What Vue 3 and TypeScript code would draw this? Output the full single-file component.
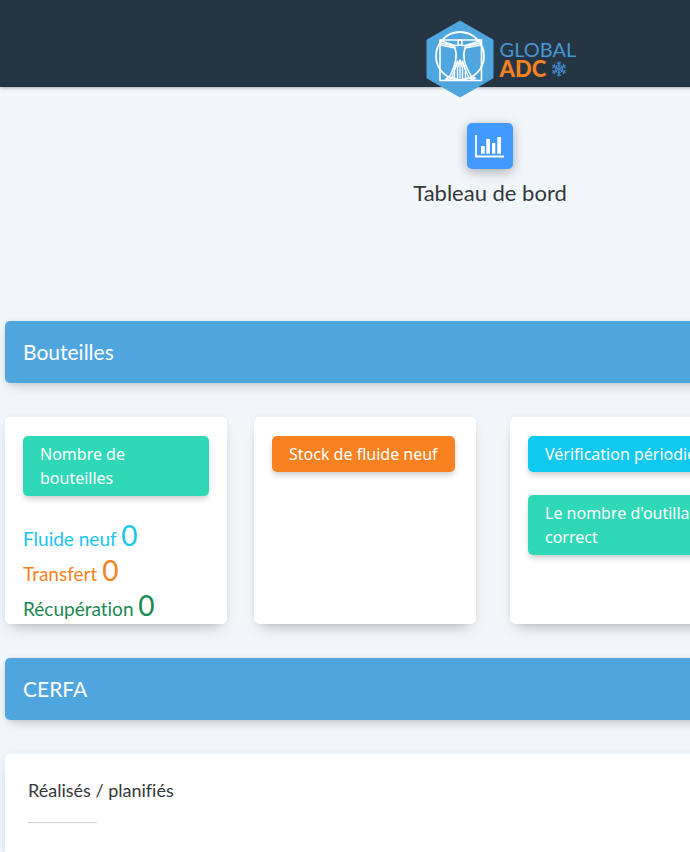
<script setup lang="ts">
interface Counter {
  label: string
  value: number
  tone: string
}

const counters: Counter[] = [
  { label: 'Fluide neuf', value: 0, tone: 'cyan' },
  { label: 'Transfert', value: 0, tone: 'orange' },
  { label: 'Récupération', value: 0, tone: 'forest' },
]

const flakeArms: number[] = [0, 60, 120, 180, 240, 300]
</script>

<template>
  <div class="shell">
    <div class="page">
      <header class="topbar">
        <a class="logo" href="#" aria-label="Global ADC">
          <svg class="emblem" viewBox="0 0 68 78" aria-hidden="true">
            <path d="M34 1 67 20V58L34 77 1 58V20Z" fill="#4fa6df" stroke="#4fa6df" stroke-linejoin="round" />
            <g fill="none" stroke="#fff" stroke-linecap="round" stroke-linejoin="round">
              <circle cx="34" cy="36" r="24" stroke-width="1.8" />
              <path d="M14 20H55.500V60.500H14Z" stroke-width="1.600" />
              <ellipse cx="34" cy="22.500" rx="2" ry="2.800" stroke-width="1.500" />
              <path d="M32 25.500 28.500 25.500 14.500 20.500M36 25.500 39.500 25.500 55 20.500M14.500 25 29 28M55 25 39 28M14.500 23 28 26M55 23 40 26" stroke-width="1.500" />
              <path d="M28.500 27Q31 33 29.800 39C29 46 26 52 24 56L19.500 59.500H23.500L27 57M39.500 27Q37 33 38.200 39C39 46 43 52 45 56L49.500 58.500 46 59.500 42 57" stroke-width="1.600" />
              <path d="M34 40 31.500 48 31.500 59.500H28.500L28.500 50 31.500 41M34 40 36.500 48V59.500H39.500V50L36.500 41" stroke-width="1.500" />
              <path d="M32 42 28.500 50 26 57M36 42 39.500 50 42.500 57M34 42V58" stroke-width="1.300" />
            </g>
          </svg>
          <span class="wordmark">
            <span class="word-top">GLOBAL</span>
            <span class="word-bottom">
              ADC
              <svg class="flake" viewBox="-8 -8 16 16" aria-hidden="true">
                <path
                  v-for="angle in flakeArms"
                  :key="angle"
                  :transform="`rotate(${angle})`"
                  d="M0 0V-7.500M0 -4.600 -2 -6.600M0 -4.600 2 -6.600M0 -2.400 -1.500 -3.900M0 -2.400 1.500 -3.900"
                />
              </svg>
            </span>
          </span>
        </a>
      </header>

      <main class="content">
        <section class="intro">
          <span class="tile">
            <svg viewBox="0 0 30 24" aria-hidden="true">
              <path d="M1 1V22.500H29" fill="none" stroke="#fff" stroke-width="1.800" />
              <path d="M6 12H9.700V19.700H6ZM11.300 5H15V19.700H11.300ZM17 9H20.300V19.700H17ZM22.300 3H26V19.700H22.300Z" fill="#fff" />
            </svg>
          </span>
          <h1>Tableau de bord</h1>
        </section>

        <h2 class="banner">Bouteilles</h2>

        <section class="cards">
          <div class="pair">
            <article class="card">
              <button class="pill green" type="button">Nombre de bouteilles</button>
              <ul class="counters">
                <li v-for="c in counters" :key="c.label" :class="c.tone">
                  {{ c.label }} <span class="count">{{ c.value }}</span>
                </li>
              </ul>
            </article>
            <article class="card">
              <button class="pill amber" type="button">Stock de fluide neuf</button>
            </article>
          </div>
          <article class="card wide">
            <button class="pill sky" type="button">Vérification périodique des outillages</button>
            <button class="pill green" type="button">Le nombre d'outillages de contrôle est<br />correct</button>
          </article>
        </section>

        <h2 class="banner">CERFA</h2>

        <section class="panel">
          <h3>Réalisés / planifiés</h3>
          <hr />
        </section>
      </main>
    </div>
  </div>
</template>

<style>
body {
  background: #f1f6fb;
}
</style>

<style scoped>
.shell {
  overflow: hidden;
  background: #f1f6fb;
  color: #343638;
  font-family: Lato, "Liberation Sans", sans-serif;
  font-variant-ligatures: none;
}

.page {
  display: flex;
  flex-direction: column;
  min-width: 980px;
  min-height: 100vh;
}

.topbar {
  display: flex;
  justify-content: center;
  box-sizing: border-box;
  height: 87px;
  padding: 20px 0 0 22px;
  background: #263544;
  box-shadow: 0 1px 3px rgba(0, 0, 0, 0.3);
}

.logo {
  display: flex;
  align-items: center;
  gap: 6px;
  height: 78px;
  text-decoration: none;
}

.emblem {
  width: 68px;
  height: 78px;
}

.wordmark {
  display: flex;
  flex-direction: column;
  line-height: 19px;
}

.word-top {
  color: #4697d2;
  font-size: 20px;
}

.word-bottom {
  display: flex;
  align-items: center;
  gap: 5px;
  color: #f58220;
  font-size: 22px;
  font-weight: 900;
}

.flake {
  width: 16px;
  height: 16px;
  fill: none;
  stroke: #3e87c8;
  stroke-width: 1.2;
}

.content {
  display: flex;
  flex: 1;
  flex-direction: column;
  padding: 36px 5px 0;
}

.intro {
  display: flex;
  flex-direction: column;
  align-items: center;
  box-sizing: border-box;
  height: 198px;
}

.tile {
  display: grid;
  place-items: center;
  width: 46px;
  height: 46px;
  border-radius: 5px;
  background: #4299ff;
  box-shadow: 0 3px 12px rgba(0, 0, 0, 0.3);
}

.tile svg {
  width: 30px;
  height: 24px;
}

h1,
h2,
h3 {
  margin: 0;
  font-weight: 400;
}

h1 {
  margin-top: 10px;
  font-size: 22px;
  line-height: 28px;
}

.banner {
  padding: 17px 18px;
  border-radius: 5px;
  background: #4fa6df;
  box-shadow: 0 6px 12px -4px rgba(0, 0, 0, 0.2), 0 0 5px rgba(0, 0, 0, 0.08);
  color: #fff;
  font-size: 21px;
  line-height: 28px;
}

.cards {
  display: flex;
  gap: 34px;
  margin: 34px 0;
}

.pair {
  display: flex;
  gap: 27px;
}

.card,
.panel {
  border-radius: 5px;
  background: #fff;
  box-shadow: 0 9px 14px -7px rgba(0, 0, 0, 0.25), 0 0 6px rgba(0, 0, 0, 0.06);
}

.card {
  display: flex;
  flex-direction: column;
  align-items: flex-start;
  gap: 23px;
  box-sizing: border-box;
  width: 222px;
  min-height: 207px;
  padding: 19px 18px 0;
}

.wide {
  flex: 1;
}

.pill {
  padding: 6px 17px;
  border: 0;
  border-radius: 5px;
  box-shadow: 0 4px 6px -1px rgba(0, 0, 0, 0.2);
  color: #fff;
  font-family: "Noto Sans", sans-serif;
  font-size: 16px;
  line-height: 24px;
  text-align: left;
}

.green {
  background: #2fd9b7;
}

.amber {
  background: #f98120;
}

.sky {
  background: #10c9f1;
}

.counters {
  display: grid;
  grid-auto-rows: 35px;
  margin: 0;
  padding: 0;
  list-style: none;
  font-size: 19px;
  line-height: 32px;
}

.count {
  font-size: 28px;
}

.cyan {
  color: #17c5ef;
}

.orange {
  color: #f58220;
}

.forest {
  color: #198754;
}

.panel {
  flex: 1;
  margin-top: 34px;
  padding: 24px 23px 0;
  border-radius: 5px 5px 0 0;
}

h3 {
  font-size: 18px;
  line-height: 24px;
}

hr {
  width: 69px;
  height: 1px;
  margin: 20px 0 0;
  border: 0;
  background: #ccc;
}
</style>
